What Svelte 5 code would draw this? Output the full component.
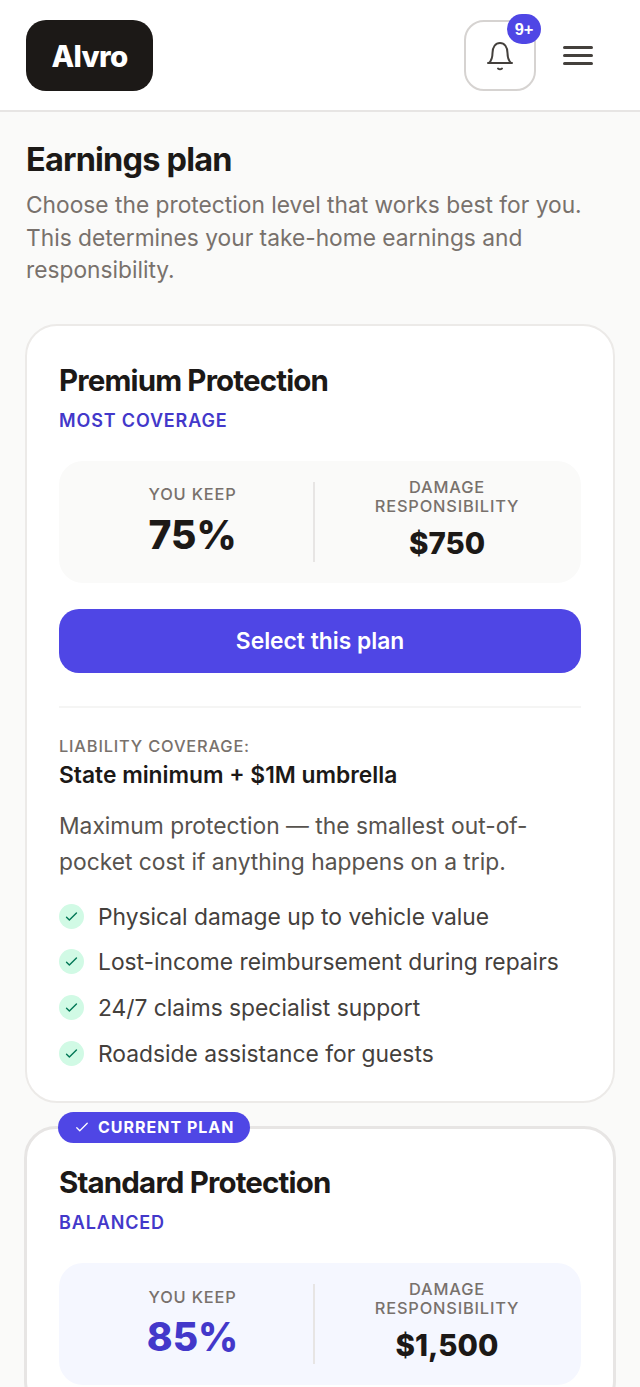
<script>
	const features = [
		'Physical damage up to vehicle value',
		'Lost-income reimbursement during repairs',
		'24/7 claims specialist support',
		'Roadside assistance for guests'
	]
</script>

<header>
	<div class="logo">Alvro</div>
	<div class="actions">
		<button class="bell" aria-label="Notifications">
			<svg width="30" height="32" viewBox="0 0 30 32" fill="none" stroke="#44403c" stroke-width="2" stroke-linecap="round" stroke-linejoin="round">
				<path d="M3 23H27M4 23C7 20 7.5 17 7.5 13C7.5 7 10.5 3 15 3C19.5 3 22.5 7 22.5 13C22.5 17 23 20 26 23" />
				<path d="M13 28.5C14 29.3 16 29.3 17 28.5" />
			</svg>
			<span class="badge">9+</span>
		</button>
		<button class="menu" aria-label="Menu">
			<span></span><span></span><span></span>
		</button>
	</div>
</header>

<main>
	<h1>Earnings plan</h1>
	<p class="intro">Choose the protection level that works best for you. This determines your take-home earnings and responsibility.</p>

	<section class="card">
		<h2>Premium Protection</h2>
		<div class="tag">MOST COVERAGE</div>
		<div class="stats">
			<div class="stat">
				<div class="label">YOU KEEP</div>
				<div class="big">75%</div>
			</div>
			<div class="stat">
				<div class="label">DAMAGE RESPONSIBILITY</div>
				<div class="amount">$750</div>
			</div>
		</div>
		<button class="select">Select this plan</button>
		<hr />
		<div class="label-left">LIABILITY COVERAGE:</div>
		<div class="liability">State minimum + $1M umbrella</div>
		<p class="desc">Maximum protection — the smallest out-of-pocket cost if anything happens on a trip.</p>
		<ul>
			{#each features as f}
				<li>
					<span class="check">
						<svg width="17" height="17" viewBox="0 0 24 24" fill="none" stroke="#047857" stroke-width="2" stroke-linecap="round" stroke-linejoin="round"><path d="M5 13l4 4L19 7" /></svg>
					</span>
					{f}
				</li>
			{/each}
		</ul>
	</section>

	<section class="card current">
		<div class="pill">
			<svg width="18" height="18" viewBox="0 0 24 24" fill="none" stroke="#fff" stroke-width="1.7" stroke-linecap="round" stroke-linejoin="round"><path d="M5 13l4 4L19 7" /></svg>
			CURRENT PLAN
		</div>
		<h2>Standard Protection</h2>
		<div class="tag">BALANCED</div>
		<div class="stats blue">
			<div class="stat">
				<div class="label">YOU KEEP</div>
				<div class="big">85%</div>
			</div>
			<div class="stat">
				<div class="label">DAMAGE RESPONSIBILITY</div>
				<div class="amount">$1,500</div>
			</div>
		</div>
	</section>
</main>

<style>
	:global(body) {
		margin: 0;
		background: #fafaf9;
		font-family: Inter, "Liberation Sans", sans-serif;
		color: #1c1917;
		height: 1387px;
		overflow: hidden;
	}
	header {
		height: 112px;
		box-sizing: border-box;
		background: #fff;
		border-bottom: 2px solid #e7e5e4;
		padding: 20px 26px 0;
		display: flex;
		justify-content: space-between;
		align-items: flex-start;
	}
	.logo {
		width: 127px;
		height: 71px;
		background: #1c1917;
		color: #fff;
		border-radius: 20px;
		font-size: 29.5px;
		font-weight: 800;
		letter-spacing: -0.7px;
		display: flex;
		align-items: center;
		justify-content: center;
	}
	.actions {
		display: flex;
		align-items: center;
		gap: 27px;
		padding-right: 21px;
	}
	.bell {
		position: relative;
		width: 72px;
		height: 71px;
		background: #fff;
		border: 2px solid #d6d3d1;
		border-radius: 20px;
		display: flex;
		align-items: center;
		justify-content: center;
		padding: 0;
	}
	.badge {
		position: absolute;
		top: -8px;
		right: -7px;
		width: 34px;
		height: 30px;
		border-radius: 15px;
		background: #4f46e5;
		color: #fff;
		font-size: 16.4px;
		font-weight: 700;
		display: flex;
		align-items: center;
		justify-content: center;
	}
	.menu {
		background: none;
		border: 0;
		padding: 0;
		width: 30px;
		display: flex;
		flex-direction: column;
		gap: 5.3px;
	}
	.menu span {
		display: block;
		height: 3px;
		width: 30px;
		background: #44403c;
		border-radius: 2px;
	}
	main {
		padding: 29px 25px 0;
	}
	h1 {
		margin: 0 1px;
		font-size: 32.5px;
		line-height: 38px;
		font-weight: 700;
		letter-spacing: -0.8px;
	}
	.intro {
		margin: 10px 1px 37px;
		font-size: 22.75px;
		line-height: 32.5px;
		color: #78716c;
	}
	.card {
		position: relative;
		background: #fff;
		border: 2px solid #eceae8;
		border-radius: 32px;
		padding: 32px 32px 25px;
		margin-bottom: 23px;
	}
	h2 {
		margin: 0;
		font-size: 29.5px;
		line-height: 44px;
		font-weight: 700;
		letter-spacing: -0.85px;
	}
	.tag {
		margin-top: 5px;
		font-size: 18px;
		line-height: 28px;
		font-weight: 600;
		letter-spacing: 0.85px;
		color: #4338ca;
	}
	.stats {
		margin-top: 26px;
		height: 122px;
		background: #fafaf9;
		border-radius: 24px;
		display: grid;
		grid-template-columns: 254px 1fr;
		align-items: center;
	}
	.stat {
		text-align: center;
		padding: 2px 0 0 13px;
	}
	.stat + .stat {
		border-left: 2px solid #e7e5e4;
		height: 80px;
		box-sizing: border-box;
		padding: 0 41px 2px 39px;
		display: flex;
		flex-direction: column;
		justify-content: center;
	}
	.label {
		font-size: 16.4px;
		line-height: 19.5px;
		font-weight: 500;
		letter-spacing: 0.82px;
		color: #78716c;
	}
	.big {
		margin-top: 5px;
		font-size: 39px;
		line-height: 50px;
		font-weight: 800;
	}
	.amount {
		margin-top: 5px;
		font-size: 29.5px;
		line-height: 42px;
		font-weight: 800;
	}
	.blue { background: #f5f7ff; }
	.blue .big { color: #4338ca; }
	.select {
		display: block;
		width: 100%;
		margin-top: 26px;
		height: 64px;
		border: 0;
		border-radius: 20px;
		background: #4f46e5;
		color: #fff;
		font: 600 22.8px Inter, sans-serif;
	}
	hr {
		border: 0;
		border-top: 2px solid #f5f5f4;
		margin: 33px 0 28px;
	}
	.label-left {
		font-size: 16.4px;
		line-height: 20px;
		font-weight: 500;
		letter-spacing: 0.82px;
		color: #78716c;
	}
	.liability {
		font-size: 22.8px;
		line-height: 30px;
		font-weight: 600;
		margin-top: 4px;
	}
	.desc {
		margin: 18px 0 0;
		font-size: 22.8px;
		line-height: 36px;
		color: #57534e;
	}
	ul {
		list-style: none;
		margin: 14px 0 0;
		padding: 0;
	}
	li {
		display: flex;
		align-items: center;
		gap: 14px;
		height: 45.6px;
		font-size: 22.8px;
		color: #44403c;
	}
	.check {
		width: 25px;
		height: 25px;
		border-radius: 50%;
		background: #d1fae5;
		display: flex;
		align-items: center;
		justify-content: center;
		flex: none;
	}
	.current {
		border: 3px solid #e7e5e4;
		margin: 0 -1px;
		padding-top: 31px;
	}
	.pill {
		position: absolute;
		top: -17px;
		left: 31px;
		height: 31px;
		padding: 0 15px;
		background: #4f46e5;
		color: #fff;
		border-radius: 16px;
		display: flex;
		align-items: center;
		gap: 7px;
		font-size: 16px;
		font-weight: 700;
		letter-spacing: 1px;
	}
</style>
